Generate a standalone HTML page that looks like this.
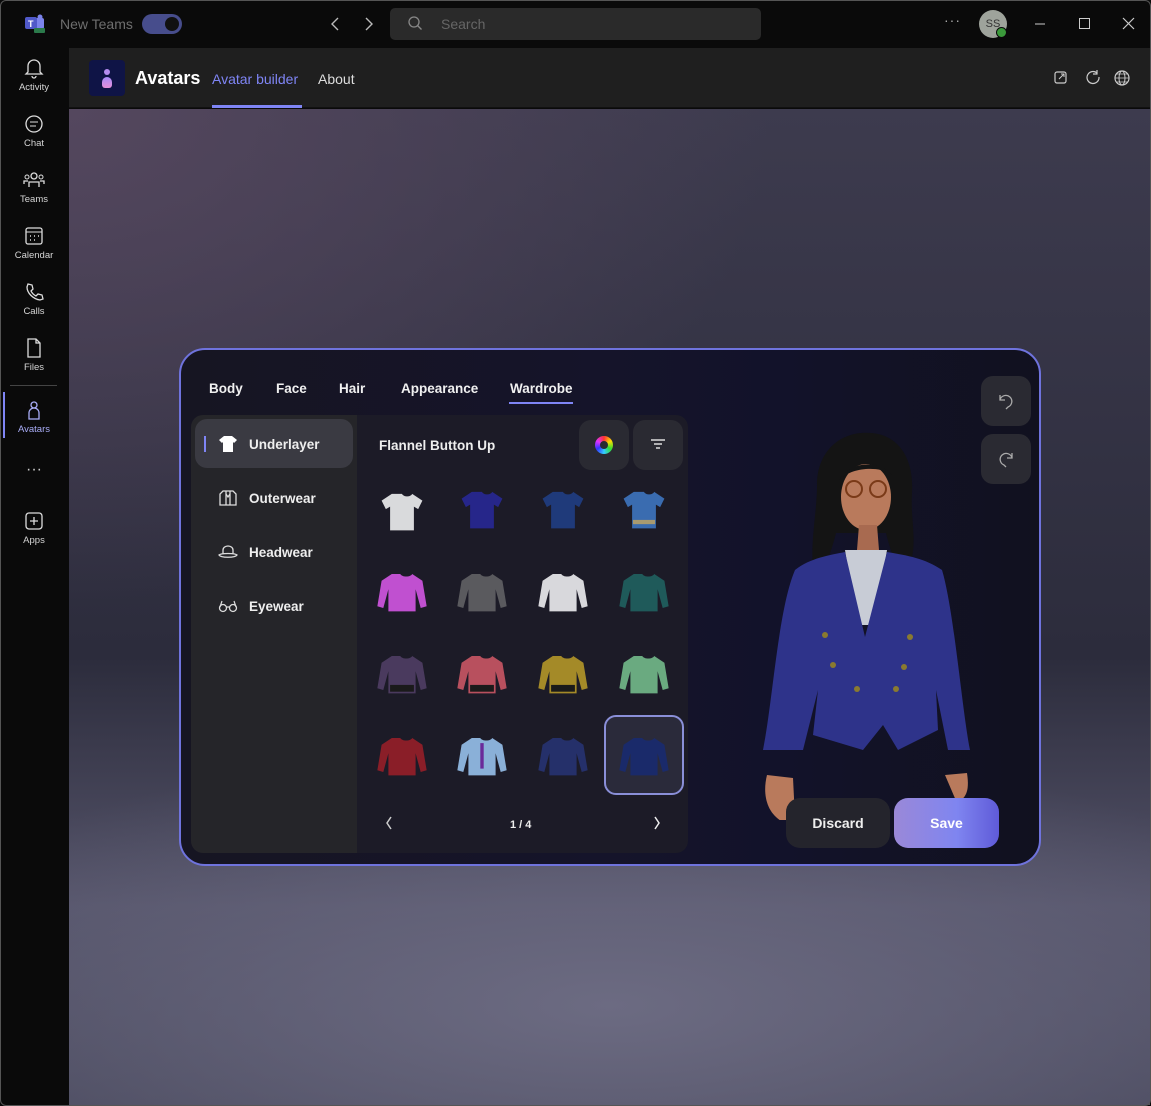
<!DOCTYPE html>
<html><head><meta charset="utf-8"><style>
*{box-sizing:border-box;margin:0;padding:0}
body{width:1151px;height:1106px;background:#0a0a0a;font-family:"Liberation Sans",sans-serif;position:relative;overflow:hidden;color:#fff}
.abs{position:absolute}
.rail{left:0;top:47px;width:68px;height:1059px;background:#0a0a0a}
.ri{position:absolute;left:0;width:68px;text-align:center;font-size:9.5px;color:#d6d6d6}
.ri svg{display:block;margin:0 auto 3px}
.hdr{left:69px;top:48px;width:1081px;height:60px;background:#1f1f1f;border-bottom:1px solid #111}
.content{left:69px;top:109px;width:1081px;height:996px;background:radial-gradient(ellipse 700px 500px at 0% 0%,#54475e 0%,rgba(60,55,75,0) 100%),radial-gradient(ellipse 800px 260px at 50% 90%,#6c6b82 0%,rgba(90,90,110,0) 100%),linear-gradient(180deg,#3d3b4e 0%,#2c2c3c 55%,#55546a 80%,#4a4a5e 100%)}
.panel{left:179px;top:348px;width:862px;height:518px;border:2px solid #6f73dd;border-radius:26px;background:linear-gradient(90deg,#161522 0%,#15142a 50%,#12122a 70%,#11111f 100%)}
.tab{position:absolute;top:381px;font-size:13.5px;font-weight:bold;color:#f0f0f0}
.inner{left:191px;top:415px;width:497px;height:438px;border-radius:12px;background:#1c1b27;overflow:hidden}
.nav{left:0;top:0;width:166px;height:438px;background:#252529}
.ni{position:absolute;left:27px;font-size:13.5px;font-weight:bold;color:#eee}
.btn{position:absolute;background:#2a2a32;border-radius:12px}
</style></head><body>
<svg class="abs" style="left:24px;top:14px" width="22" height="20" viewBox="0 0 22 20"><rect x="9" y="4" width="11" height="11" rx="2" fill="#7b83eb"/><circle cx="16" cy="3" r="2.5" fill="#7b83eb"/><rect x="1" y="3" width="12" height="12" rx="2" fill="#5059c9"/><text x="4" y="13" font-size="9" font-weight="bold" fill="#fff" font-family="Liberation Sans">T</text><rect x="10" y="14" width="11" height="5" rx="1" fill="#2b7a4b"/></svg>
<div class="abs" style="left:60px;top:16px;font-size:14px;color:#6e6e6e">New Teams</div>
<div class="abs" style="left:142px;top:14px;width:40px;height:20px;border-radius:10px;background:#474d8c"></div>
<div class="abs" style="left:165px;top:17px;width:14px;height:14px;border-radius:7px;background:#111"></div>
<svg class="abs" style="left:328px;top:16px" width="50" height="16"><path d="M10 2L4 8l6 6M38 2l6 6-6 6" stroke="#bbb" stroke-width="1.4" fill="none"/></svg>
<div class="abs" style="left:390px;top:8px;width:371px;height:32px;border-radius:5px;background:#2a2a2a"></div>
<svg class="abs" style="left:407px;top:15px" width="16" height="16"><circle cx="7" cy="7" r="5" stroke="#888" stroke-width="1.3" fill="none"/><path d="M10.5 10.5l4 4" stroke="#888" stroke-width="1.3"/></svg>
<div class="abs" style="left:441px;top:16px;font-size:14px;color:#666">Search</div>
<div class="abs" style="left:944px;top:12px;font-size:14px;color:#aaa;letter-spacing:1px">···</div>
<div class="abs" style="left:979px;top:10px;width:28px;height:28px;border-radius:14px;background:#9ea39b;color:#333;font-size:11px;text-align:center;line-height:28px">SS</div>
<div class="abs" style="left:996px;top:27px;width:11px;height:11px;border-radius:6px;background:#3b9a3b;border:1.5px solid #0a0a0a"></div>
<svg class="abs" style="left:1030px;top:14px" width="110" height="20"><path d="M5 10h10" stroke="#ccc"/><rect x="49.5" y="4.5" width="10" height="10" stroke="#ccc" fill="none"/><path d="M93 4l11 11M104 4L93 15" stroke="#ccc" stroke-width="1.2"/></svg>
<div class="abs rail">
<div class="ri" style="top:10px"><svg width="22" height="22" viewBox="0 0 22 22"><path d="M5 15V9a6 6 0 0112 0v6l2 2H3z M9 19a2 2 0 004 0" stroke="#ddd" stroke-width="1.3" fill="none"/></svg>Activity</div>
<div class="ri" style="top:66px"><svg width="22" height="22"><circle cx="11" cy="11" r="8" stroke="#ddd" stroke-width="1.3" fill="none"/><path d="M7 9h8M7 13h6" stroke="#ddd"/></svg>Chat</div>
<div class="ri" style="top:122px"><svg width="22" height="22"><circle cx="11" cy="7" r="3" stroke="#ddd" fill="none" stroke-width="1.3"/><circle cx="4" cy="8" r="2" stroke="#ddd" fill="none"/><circle cx="18" cy="8" r="2" stroke="#ddd" fill="none"/><path d="M6 18v-5h10v5M1 15v-3h4M21 15v-3h-4" stroke="#ddd" fill="none" stroke-width="1.3"/></svg>Teams</div>
<div class="ri" style="top:178px"><svg width="22" height="22"><rect x="3" y="3" width="16" height="16" rx="2" stroke="#ddd" fill="none" stroke-width="1.3"/><path d="M3 7h16" stroke="#ddd"/><path d="M7 11h1M11 11h1M15 11h1M7 15h1M11 15h1" stroke="#ddd" stroke-width="1.5"/></svg>Calendar</div>
<div class="ri" style="top:234px"><svg width="22" height="22"><path d="M5 3l4 1 1 4-2 2c1 2 3 4 5 5l2-2 4 1 1 4-3 1C10 18 4 12 4 6z" stroke="#ddd" fill="none" stroke-width="1.3"/></svg>Calls</div>
<div class="ri" style="top:290px"><svg width="22" height="22"><path d="M5 2h8l4 4v14H5z M13 2v4h4" stroke="#ddd" fill="none" stroke-width="1.3"/></svg>Files</div>
<div class="abs" style="left:10px;top:338px;width:47px;height:1px;background:#444"></div>
<div class="abs" style="left:3px;top:345px;width:2px;height:46px;background:#7f85f5"></div>
<div class="ri" style="top:352px;color:#a9adf7"><svg width="22" height="22"><circle cx="11" cy="6" r="3" stroke="#a9adf7" fill="none" stroke-width="1.3"/><path d="M6 20v-6a5 5 0 0110 0v6z" stroke="#a9adf7" fill="none" stroke-width="1.3"/></svg>Avatars</div>
<div class="ri" style="top:414px;font-size:16px;color:#ccc">···</div>
<div class="ri" style="top:463px"><svg width="22" height="22"><rect x="3" y="3" width="16" height="16" rx="3" stroke="#ddd" fill="none" stroke-width="1.3"/><path d="M11 7v8M7 11h8" stroke="#ddd" stroke-width="1.3"/></svg>Apps</div>
</div>
<div class="abs hdr"></div>
<div class="abs" style="left:89px;top:60px;width:36px;height:36px;border-radius:4px;background:#0f1446"></div>
<div class="abs" style="left:104px;top:69px;width:6px;height:6px;border-radius:3px;background:#b58cf0"></div>
<div class="abs" style="left:102px;top:77px;width:10px;height:11px;border-radius:5px 5px 3px 3px;background:linear-gradient(#a78bfa,#e58fd8)"></div>
<div class="abs" style="left:135px;top:68px;font-size:18px;font-weight:bold">Avatars</div>
<div class="abs" style="left:212px;top:71px;font-size:14px;color:#7f85f5">Avatar builder</div>
<div class="abs" style="left:212px;top:105px;width:90px;height:3px;background:#7f85f5"></div>
<div class="abs" style="left:318px;top:71px;font-size:14px;color:#ddd">About</div>
<svg class="abs" style="left:1053px;top:69px" width="80" height="18"><rect x="2" y="3" width="11" height="11" rx="2" stroke="#ccc" fill="none" stroke-width="1.2"/><path d="M6 10l5-5M8 5h3v3" stroke="#ccc" fill="none"/><path d="M44 4a6 6 0 10 2 4M44 1v4h-4" stroke="#ccc" fill="none" stroke-width="1.2"/><circle cx="69" cy="9" r="7" stroke="#ccc" fill="none" stroke-width="1.2"/><ellipse cx="69" cy="9" rx="3" ry="7" stroke="#ccc" fill="none"/><path d="M62 9h14M63 5h12M63 13h12" stroke="#ccc" stroke-width=".8"/></svg>
<div class="abs content"></div>
<div class="abs panel"></div>
<div class="tab" style="left:209px">Body</div>
<div class="tab" style="left:276px">Face</div>
<div class="tab" style="left:339px">Hair</div>
<div class="tab" style="left:401px">Appearance</div>
<div class="tab" style="left:510px">Wardrobe</div>
<div class="abs" style="left:509px;top:402px;width:64px;height:2px;background:#7f85f5"></div>
<div class="abs inner">
 <div class="abs nav">
  <div class="abs" style="left:4px;top:4px;width:158px;height:49px;border-radius:12px;background:#3a3a42"></div>
  <div class="abs" style="left:13px;top:21px;width:2px;height:16px;background:#7f85f5"></div>
  <svg class="abs" style="left:27px;top:20px" width="20" height="18"><path d="M6 1h8l5 4-3 3-1-1v10H5V7L4 8 1 5z" fill="#fff"/></svg>
  <div class="ni" style="left:58px;top:22px">Underlayer</div>
  <svg class="abs" style="left:27px;top:74px" width="20" height="18"><path d="M5 2h10l3 3v11H2V5z M8 2v14M12 2v14M8 5l2 3 2-3" stroke="#ddd" fill="none" stroke-width="1.3"/></svg>
  <div class="ni" style="left:58px;top:76px">Outerwear</div>
  <svg class="abs" style="left:27px;top:128px" width="20" height="18"><path d="M5 11V7a5 4 0 0110 0v4M1 12c2 3 16 3 18 0-2-2-16-2-18 0z" stroke="#ddd" fill="none" stroke-width="1.3"/></svg>
  <div class="ni" style="left:58px;top:130px">Headwear</div>
  <svg class="abs" style="left:27px;top:184px" width="20" height="14"><circle cx="5" cy="9" r="3.5" stroke="#ddd" fill="none" stroke-width="1.3"/><circle cx="15" cy="9" r="3.5" stroke="#ddd" fill="none" stroke-width="1.3"/><path d="M8 8h4M2 8l2-6M18 8l-2-6" stroke="#ddd" fill="none" stroke-width="1.2"/></svg>
  <div class="ni" style="left:58px;top:184px">Eyewear</div>
 </div>
 <div class="ni" style="left:188px;top:23px">Flannel Button Up</div>
 <div class="btn" style="left:388px;top:5px;width:50px;height:50px"></div>
 <div class="abs" style="left:404px;top:21px;width:18px;height:18px;border-radius:9px;background:conic-gradient(#f33,#fd0,#3d3,#3cf,#33f,#d3f,#f33)"></div>
 <div class="abs" style="left:409px;top:26px;width:8px;height:8px;border-radius:4px;background:#2a2a32"></div>
 <div class="btn" style="left:442px;top:5px;width:50px;height:50px"></div>
 <svg class="abs" style="left:459px;top:23px" width="16" height="12"><path d="M1 2h14M4 6h8M6 10h4" stroke="#ddd" stroke-width="1.4"/></svg>
 <div class="abs" style="left:413px;top:300px;width:80px;height:80px;border-radius:12px;border:2px solid #8a8fd8;background:#2a2a3a"></div>
 <svg class="abs" style="left:0;top:0" width="497" height="438">
  <defs>
   <path id="ss" d="M-12-19l-12 8 5 10 5-3v28h28v-28l5 3 5-10-12-8c-2 4-10 4-12 0z"/>
   <path id="ls" d="M-12-20l-12 8-5 30 7 2 6-22v26h32v-26l6 22 7-2-5-30-12-8c-2 4-12 4-14 0z"/>
  </defs>
  <g transform="translate(211,95) scale(.85)"><use href="#ss" fill="#d9dadc"/></g>
  <g transform="translate(291,93) scale(.85)"><use href="#ss" fill="#26268a"/></g>
  <g transform="translate(372,93) scale(.85)"><use href="#ss" fill="#1f3a7a"/></g>
  <g transform="translate(453,93) scale(.85)"><use href="#ss" fill="#3a6cb0"/><rect x="-13" y="14" width="26" height="5" fill="#a89a70"/></g>
  <g transform="translate(211,176) scale(.85)"><use href="#ls" fill="#c050d0"/></g>
  <g transform="translate(291,176) scale(.85)"><use href="#ls" fill="#5a5a5e"/></g>
  <g transform="translate(372,176) scale(.85)"><use href="#ls" fill="#d8d8dc"/></g>
  <g transform="translate(453,176) scale(.85)"><use href="#ls" fill="#1f5a5a"/></g>
  <g transform="translate(211,258) scale(.85)"><use href="#ls" fill="#4a3a5e"/><rect x="-14" y="14" width="28" height="8" fill="#1a1a1a"/></g>
  <g transform="translate(291,258) scale(.85)"><use href="#ls" fill="#b8505e"/><rect x="-14" y="14" width="28" height="8" fill="#1a1a1a"/></g>
  <g transform="translate(372,258) scale(.85)"><use href="#ls" fill="#a48a28"/><rect x="-14" y="14" width="28" height="8" fill="#1a1a1a"/></g>
  <g transform="translate(453,258) scale(.85)"><use href="#ls" fill="#6aaa80"/></g>
  <g transform="translate(211,340) scale(.85)"><use href="#ls" fill="#8a1e28"/></g>
  <g transform="translate(291,340) scale(.85)"><use href="#ls" fill="#8ab0d8"/><rect x="-2" y="-14" width="4" height="30" fill="#6a2a9a"/></g>
  <g transform="translate(372,340) scale(.85)"><use href="#ls" fill="#25306a"/></g>
  <g transform="translate(453,340) scale(.85)"><use href="#ls" fill="#1a2a6a"/></g>
  <path d="M200 402l-4 6 4 6" stroke="#ccc" stroke-width="1.5" fill="none"/>
  <path d="M464 402l4 6-4 6" stroke="#eee" stroke-width="1.5" fill="none"/>
  <text x="319" y="413" font-size="11" font-weight="bold" fill="#eee" font-family="Liberation Sans">1 / 4</text>
 </svg>
</div>
<div class="btn" style="left:981px;top:376px;width:50px;height:50px"></div>
<div class="btn" style="left:981px;top:434px;width:50px;height:50px"></div>
<svg class="abs" style="left:996px;top:392px" width="20" height="80"><path d="M4 3v5h5M4 8a6 6 0 118 7l-2 2" stroke="#aaa" fill="none" stroke-width="1.3"/><path d="M16 61v5h-5M16 66a6 6 0 10-8 7l2 2" stroke="#aaa" fill="none" stroke-width="1.3"/></svg>
<svg class="abs" style="left:755px;top:425px" width="225" height="395" viewBox="0 0 225 395">
 <path d="M62 60c0-35 25-55 55-52 30 3 42 30 40 60-2 30 8 55-6 80-8 0-15-20-20-40l-50 0c-5 20-12 40-22 40-5-25 3-60 3-88z" fill="#141414"/>
 <ellipse cx="111" cy="72" rx="25" ry="33" fill="#b97a5c"/>
 <path d="M84 55c10-18 40-22 54-4-10-10-40-10-54 4z" fill="#141414"/>
 <circle cx="99" cy="64" r="8" stroke="#7a3a18" stroke-width="2" fill="none"/><circle cx="123" cy="64" r="8" stroke="#7a3a18" stroke-width="2" fill="none"/>
 <path d="M104 100l-2 25h22l-2-25z" fill="#a86a50"/>
 <path d="M90 125h42l-12 75h-18z" fill="#c8ccd6"/>
 <path d="M40 145c15-12 35-15 50-18l20 85 22-85c18 3 38 6 55 18 12 40 20 140 28 180h-22l-12-60 2 40-40 20-15-25-20 25-50-15 5-45-15 60H8c10-50 15-140 32-180z" fill="#2e338a"/>
 <g fill="#8a7a30"><circle cx="70" cy="210" r="3"/><circle cx="155" cy="212" r="3"/><circle cx="78" cy="240" r="3"/><circle cx="149" cy="242" r="3"/><circle cx="102" cy="264" r="3"/><circle cx="141" cy="264" r="3"/></g>
 <path d="M12 350c-5 20 0 40 18 48l10-5-2-40z" fill="#b97a5c"/>
 <path d="M190 350l22-2c3 20-2 25-10 30z" fill="#b97a5c"/>
</svg>
<div class="abs" style="left:786px;top:798px;width:104px;height:50px;border-radius:14px;background:#24242c;font-size:14px;font-weight:bold;text-align:center;line-height:50px;color:#eee">Discard</div>
<div class="abs" style="left:894px;top:798px;width:105px;height:50px;border-radius:14px;background:linear-gradient(90deg,#9a88d8,#7f85f0 60%,#5f5ad8);font-size:14px;font-weight:bold;text-align:center;line-height:50px;color:#fff">Save</div>
<div class="abs" style="left:0;top:0;width:1151px;height:1106px;border:1px solid #555;border-radius:6px;pointer-events:none"></div>
</body></html>
